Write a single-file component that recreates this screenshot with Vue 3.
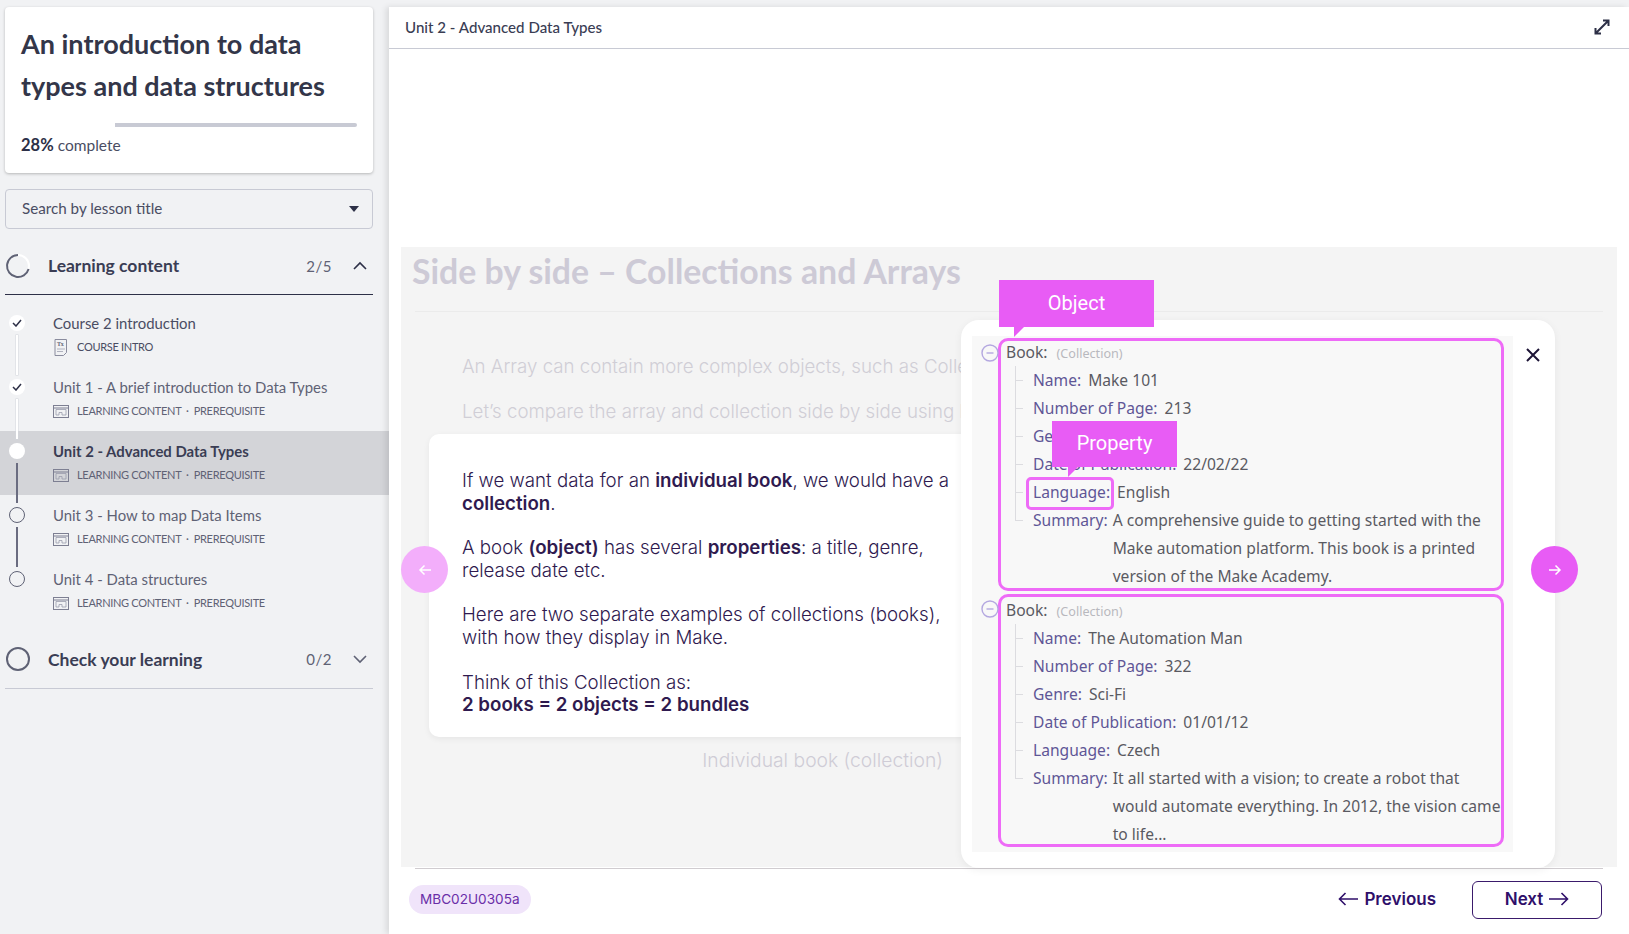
<template>
  <div class="app">
    <aside class="side">
      <div class="course-card">
        <h1>An introduction to data types and data structures</h1>
        <div class="progress"><div class="progress-fill"></div></div>
        <div class="percent"><b>28%</b> complete</div>
      </div>

      <div class="search">
        <span>Search by lesson title</span>
        <svg width="12" height="7" viewBox="0 0 12 7"><path d="M1 0h10L6 6z" fill="#2d3047" /></svg>
      </div>

      <div class="section-head">
        <svg class="ring" width="26" height="26" viewBox="0 0 26 26">
          <circle cx="13" cy="13" r="11" fill="none" stroke="#fff" stroke-width="2" />
          <path d="M13 2A11 11 0 1 0 23.6 16" fill="none" stroke="#5f6275" stroke-width="2" />
        </svg>
        <span class="section-title">Learning content</span>
        <span class="count">2/5</span>
        <svg width="16" height="10" viewBox="0 0 16 10"><path d="M2 8l6-6 6 6" fill="none" stroke="#2d3047" stroke-width="1.6" /></svg>
      </div>

      <ul class="lessons">
        <li v-for="(l, i) in lessons" :key="l.title" class="lesson" :class="{ current: l.state === 'current', first: i === 0 }">
          <span class="dot" :class="l.state">
            <svg v-if="l.state === 'done'" width="10" height="8" viewBox="0 0 10 8"><path d="M1 4l3 3 5-6" fill="none" stroke="#2d3047" stroke-width="1.5" /></svg>
          </span>
          <span v-if="i < lessons.length - 1" class="link" :class="{ dark: l.state !== 'done' }"></span>
          <div class="lesson-title">{{ l.title }}</div>
          <div class="lesson-meta">
            <svg v-if="i === 0" class="doc-icon" width="16" height="17" viewBox="0 0 16 17">
              <path d="M2 .5h11.5v13l-3 3H2z" fill="none" stroke="#8a8c9e" />
              <text x="4" y="7" font-size="6" font-weight="700" fill="#5f6275" font-family="Liberation Serif, serif">Tx</text>
              <path d="M4 10h8M4 12.500h6" stroke="#b0b2bf" />
            </svg>
            <svg v-else class="doc-icon" width="16" height="13" viewBox="0 0 16 13">
              <rect x=".5" y=".5" width="15" height="12" fill="none" stroke="#7d7f92" />
              <path d="M.5 3h15" stroke="#7d7f92" />
              <path d="M3 4.500h10v5.500h-4v-2.500h-3v2.500h-3z" fill="none" stroke="#9a9cac" stroke-width=".8" />
            </svg>
            <span>{{ l.meta }}</span>
          </div>
        </li>
      </ul>

      <div class="section-head check">
        <svg class="ring" width="26" height="26" viewBox="0 0 26 26">
          <circle cx="13" cy="13" r="11" fill="none" stroke="#5f6275" stroke-width="2" />
        </svg>
        <span class="section-title">Check your learning</span>
        <span class="count">0/2</span>
        <svg width="16" height="10" viewBox="0 0 16 10"><path d="M2 2l6 6 6-6" fill="none" stroke="#5f6275" stroke-width="1.6" /></svg>
      </div>
    </aside>

    <main class="main">
      <header class="top-bar">
        <span>Unit 2 - Advanced Data Types</span>
        <svg width="18" height="18" viewBox="0 0 18 18" fill="none" stroke="#2d3047" stroke-width="2">
          <path d="M3 15L15 3M10 2.500h5.500V8M2.500 10v5.500H8" />
        </svg>
      </header>

      <section class="stage">
        <h2>Side by side – Collections and Arrays</h2>
        <p class="faded">An Array can contain more complex objects, such as Collections</p>
        <p class="faded second">Let’s compare the array and collection side by side using books</p>

        <div class="note">
          <p>If we want data for an <b>individual book</b>, we would have a <b>collection</b>.</p>
          <p>A book <b>(object)</b> has several <b>properties</b>: a title, genre, release date etc.</p>
          <p>Here are two separate examples of collections (books), with how they display in Make.</p>
          <p>Think of this Collection as:<br /><b>2 books = 2 objects = 2 bundles</b></p>
        </div>
        <div class="caption">Individual book (collection)</div>

        <button class="round prev" aria-label="Back">
          <svg width="14" height="12" viewBox="0 0 14 12" fill="none" stroke="#fff" stroke-width="1.5"><path d="M13 6H2M6.500 1.500L2 6l4.500 4.500" /></svg>
        </button>

        <div class="modal">
          <div class="shot">
            <div v-for="book in books" :key="book.rows[0][1]" class="book-box">
              <svg class="minus" width="18" height="18" viewBox="0 0 18 18" fill="none" stroke="#b4a8e0" stroke-width="1.400">
                <circle cx="9" cy="9" r="8" /><path d="M5.500 9h7" />
              </svg>
              <div class="book-head">Book: <small>(Collection)</small></div>
              <div v-for="row in book.rows" :key="row[0]" class="tree-row">
                <span class="key">{{ row[0] }}</span>
                <span class="val">{{ row[1] }}</span>
              </div>
            </div>
          </div>
          <svg class="close" width="16" height="16" viewBox="0 0 16 16" fill="none" stroke="#1d1436" stroke-width="2"><path d="M2 2l12 12M14 2L2 14" /></svg>
        </div>

        <div class="callout object">Object</div>
        <div class="callout property">Property</div>
        <div class="lang-box"></div>

        <button class="round next" aria-label="Forward">
          <svg width="14" height="12" viewBox="0 0 14 12" fill="none" stroke="#fff" stroke-width="1.5"><path d="M1 6h11M7.500 1.500L12 6l-4.500 4.500" /></svg>
        </button>
      </section>

      <footer class="foot">
        <span class="code">MBC02U0305a</span>
        <div class="foot-nav">
          <button class="nav-btn">
            <svg width="20" height="14" viewBox="0 0 20 14" fill="none" stroke="#2f0f6a" stroke-width="1.6"><path d="M20 7H1.500M7.500 1L1.500 7l6 6" /></svg>
            Previous
          </button>
          <button class="nav-btn outlined">
            Next
            <svg width="20" height="14" viewBox="0 0 20 14" fill="none" stroke="#2f0f6a" stroke-width="1.6"><path d="M0 7h18.500M12.500 1l6 6-6 6" /></svg>
          </button>
        </div>
      </footer>
    </main>
  </div>
</template>

<script setup>
const meta = 'LEARNING CONTENT  ·  PREREQUISITE'

const lessons = [
  { title: 'Course 2 introduction', meta: 'COURSE INTRO', state: 'done' },
  { title: 'Unit 1 - A brief introduction to Data Types', meta, state: 'done' },
  { title: 'Unit 2 - Advanced Data Types', meta, state: 'current' },
  { title: 'Unit 3 - How to map Data Items', meta, state: 'todo' },
  { title: 'Unit 4 - Data structures', meta, state: 'todo' },
]

const books = [
  {
    rows: [
      ['Name:', 'Make 101'],
      ['Number of Page:', '213'],
      ['Genre:', 'Business'],
      ['Date of Publication:', '22/02/22'],
      ['Language:', 'English'],
      ['Summary:', 'A comprehensive guide to getting started with the Make automation platform. This book is a printed version of the Make Academy.'],
    ],
  },
  {
    rows: [
      ['Name:', 'The Automation Man'],
      ['Number of Page:', '322'],
      ['Genre:', 'Sci-Fi'],
      ['Date of Publication:', '01/01/12'],
      ['Language:', 'Czech'],
      ['Summary:', 'It all started with a vision; to create a robot that would automate everything. In 2012, the vision came to life...'],
    ],
  },
]
</script>

<style>
html,
body {
  margin: 0;
  background: #f1f2f4;
}
</style>

<style scoped>
.app {
  display: flex;
  height: 934px;
  overflow: hidden;
  font-family: "Lato", "Noto Sans", sans-serif;
  color: #2d3047;
}

.side {
  width: 389px;
  flex: none;
  padding-top: 7px;
  background: #f1f2f4;
}

.course-card {
  margin: 0 16px 0 5px;
  height: 166px;
  box-sizing: border-box;
  padding: 16px 16px 0;
  background: #fff;
  border-radius: 4px;
  box-shadow: 0 1px 3px rgba(0, 0, 0, 0.25);
}

h1 {
  margin: 0;
  font-size: 27px;
  line-height: 42px;
  font-weight: 700;
  color: #333649;
}

.progress {
  margin-top: 16px;
  height: 4px;
  background: #c8cad4;
  border-radius: 2px;
}

.progress-fill {
  width: 28%;
  height: 100%;
  background: #fff;
}

.percent {
  margin-top: 7px;
  font-size: 15.500px;
  line-height: 22px;
  color: #4a4d63;
}

.percent b {
  font-size: 16.500px;
  font-weight: 700;
  color: #2d3047;
}

.search {
  margin: 16px 16px 0 5px;
  height: 40px;
  box-sizing: border-box;
  padding: 0 12px 2px 16px;
  display: flex;
  align-items: center;
  justify-content: space-between;
  border: 1px solid #c8cad4;
  border-radius: 4px;
  font-size: 15.200px;
  color: #4a4d63;
}

.search svg {
  margin-top: 2px;
}

.section-head {
  margin: 16px 16px 0 5px;
  height: 50px;
  box-sizing: border-box;
  padding-bottom: 8px;
  display: flex;
  align-items: center;
  border-bottom: 1px solid #2d3047;
}

.section-head.check {
  margin-top: 14px;
  height: 52px;
  padding-bottom: 7px;
  border-bottom-color: #c8cad4;
}

.ring {
  flex: none;
}

.section-title {
  margin-left: 17px;
  flex: 1;
  font-size: 17.500px;
  font-weight: 700;
  color: #3a3d54;
}

.count {
  margin-right: 20px;
  font-size: 15px;
  letter-spacing: 0.5px;
  color: #5f6275;
}

.section-head > svg:last-child {
  margin-right: 5px;
}

.lessons {
  list-style: none;
  margin: 8px 0 0;
  padding: 0;
}

.lesson {
  position: relative;
  height: 64px;
  box-sizing: border-box;
  padding: 9px 0 0 53px;
  color: #5f6275;
}

.lesson.first {
  color: #4a4d63;
}

.lesson.current {
  background: #d3d4d8;
}

.lesson-title {
  font-size: 14.900px;
  line-height: 22px;
}

.current .lesson-title {
  font-weight: 700;
  color: #3a3d54;
}

.lesson-meta {
  margin-top: 4px;
  display: flex;
  align-items: center;
  font-size: 11px;
  letter-spacing: -0.3px;
  line-height: 18px;
  white-space: pre;
}

.doc-icon {
  margin-right: 8px;
  flex: none;
}

.dot {
  position: absolute;
  left: 9px;
  top: 12px;
  width: 16px;
  height: 16px;
  box-sizing: border-box;
  border-radius: 50%;
  display: flex;
  align-items: center;
  justify-content: center;
}

.dot.done,
.dot.current {
  background: #fff;
}

.dot.todo {
  border: 1px solid #5f6275;
}

.link {
  position: absolute;
  left: 16px;
  top: 32px;
  width: 2px;
  height: 40px;
  background: #fff;
  box-shadow: 0 0 0 0.5px #d4d5dc;
  z-index: 1;
}

.link.dark {
  background: #6a6c80;
  box-shadow: none;
}

.main {
  flex: 1;
  margin-top: 7px;
  display: flex;
  flex-direction: column;
  background: #fff;
  box-shadow: -3px 0 6px rgba(0, 0, 0, 0.1);
  position: relative;
}

.top-bar {
  height: 42px;
  box-sizing: border-box;
  padding: 0 18px 1px 16px;
  display: flex;
  align-items: center;
  justify-content: space-between;
  border-bottom: 1px solid #c8cad4;
  font-size: 15.100px;
  font-weight: 500;
  color: #3a3d54;
}

.stage {
  position: relative;
  margin: 198px 12px 0;
  height: 620px;
  flex: none;
  background: #f4f4f4;
  font-family: "Inter", sans-serif;
}

h2 {
  margin: 0 14px;
  height: 65px;
  box-sizing: border-box;
  border-bottom: 1px solid #ebebeb;
  font-family: "Lato", sans-serif;
  font-size: 33.800px;
  line-height: 48px;
  font-weight: 700;
  color: #cdcad6;
  text-indent: -3px;
}

.faded {
  margin: 43px 0 0 61px;
  white-space: nowrap;
  font-size: 18.700px;
  line-height: 24px;
  font-weight: 300;
  color: #d0ced6;
}

.faded.second {
  margin-top: 21px;
}

.note {
  margin: 10px 0 0 28px;
  width: 546px;
  box-sizing: border-box;
  padding: 36px 25px 20px 33px;
  background: #fff;
  border-radius: 10px;
  box-shadow: 0 2px 6px rgba(0, 0, 0, 0.06);
  font-size: 18.700px;
  line-height: 22.600px;
  font-weight: 300;
  color: #2f1a4f;
}

.note p {
  margin: 0 0 22px;
}

.note p:last-child {
  margin: 0;
}

.note b {
  font-weight: 600;
}

.caption {
  margin: 11px 0 0 61px;
  width: 481px;
  text-align: right;
  font-size: 19.300px;
  line-height: 24px;
  font-weight: 300;
  color: #cfccd6;
}

.round {
  position: absolute;
  top: 299px;
  width: 47px;
  height: 47px;
  padding: 0;
  border: none;
  border-radius: 50%;
  display: flex;
  align-items: center;
  justify-content: center;
}

.prev {
  left: 0;
  background: #f3aefb;
}

.next {
  left: 1130px;
  background: #e85cf5;
}

.modal {
  position: absolute;
  left: 560px;
  top: 73px;
  width: 594px;
  height: 548px;
  background: #fff;
  border-radius: 18px;
  box-shadow: 0 2px 8px rgba(0, 0, 0, 0.06);
}

.close {
  position: absolute;
  left: 564px;
  top: 27px;
}

.shot {
  position: absolute;
  left: 11px;
  top: 16px;
  width: 541px;
  height: 516px;
  padding: 2px 0 0 26px;
  box-sizing: border-box;
  background: #f8f8f8;
  font-family: "Noto Sans", sans-serif;
  font-size: 15.600px;
  color: #5a5a62;
}

.book-box {
  position: relative;
  width: 506px;
  height: 253px;
  box-sizing: border-box;
  margin-bottom: 3px;
  padding-left: 5px;
  border: 3px solid #ee6bf7;
  border-radius: 10px;
}

.minus {
  position: absolute;
  left: -20px;
  top: 3px;
}

.book-head {
  margin-top: -1px;
  height: 28px;
  line-height: 28px;
}

.book-box:first-child .book-head {
  margin-top: -3px;
}

.book-head small {
  margin-left: 5px;
  font-size: 12.600px;
  color: #b8b8be;
}

.tree-row {
  position: relative;
  margin-left: 9px;
  padding-left: 18px;
  display: flex;
  gap: 7px;
  line-height: 28px;
}

.tree-row:last-child {
  gap: 5px;
}

.tree-row::before {
  content: "";
  position: absolute;
  left: 0;
  top: 14px;
  width: 8px;
  border-top: 1px solid #dcdce0;
}

.tree-row::after {
  content: "";
  position: absolute;
  left: 0;
  top: 0;
  height: 100%;
  border-left: 1px solid #dcdce0;
}

.tree-row:last-child::after {
  height: 14px;
}

.key {
  flex: none;
  color: #5f5696;
}

.val {
  flex: 1;
  margin-right: -4px;
}

.callout {
  position: absolute;
  box-sizing: border-box;
  padding-bottom: 1px;
  background: #e85cf5;
  color: #fff;
  font-family: "Roboto", sans-serif;
  font-size: 20px;
  display: flex;
  align-items: center;
  justify-content: center;
}

.callout::after {
  content: "";
  position: absolute;
  top: 100%;
  border-top: 10px solid #e85cf5;
  border-right: 10px solid transparent;
}

.object {
  left: 598px;
  top: 33px;
  width: 155px;
  height: 47px;
}

.object::after {
  left: 15px;
}

.property {
  left: 651px;
  top: 174px;
  width: 125px;
  height: 46px;
  padding-bottom: 2px;
}

.property::after {
  left: 16px;
}

.lang-box {
  position: absolute;
  left: 625px;
  top: 230px;
  width: 88px;
  height: 33px;
  box-sizing: border-box;
  border: 3px solid #ee6bf7;
  border-radius: 5px;
}

.foot {
  margin: 1px 26px 0;
  padding-bottom: 4px;
  flex: 1;
  display: flex;
  align-items: center;
  justify-content: space-between;
  border-top: 1px solid #d0ccd0;
  font-family: "Inter", sans-serif;
}

.code {
  margin-left: -6px;
  padding: 0 11px;
  height: 29px;
  line-height: 29px;
  border-radius: 15px;
  background: #f0e4fa;
  font-size: 13.600px;
  color: #6a2ea8;
}

.foot-nav {
  display: flex;
  align-items: center;
  gap: 36px;
  margin-right: 1px;
}

.nav-btn {
  display: flex;
  align-items: center;
  justify-content: center;
  gap: 6px;
  padding: 0 0 2px;
  border: none;
  background: none;
  font-family: "Inter", sans-serif;
  font-size: 17px;
  font-weight: 600;
  color: #2f0f6a;
}

.outlined {
  width: 130px;
  height: 38px;
  box-sizing: border-box;
  border: 1.500px solid #3a1a6b;
  border-radius: 6px;
}
</style>
